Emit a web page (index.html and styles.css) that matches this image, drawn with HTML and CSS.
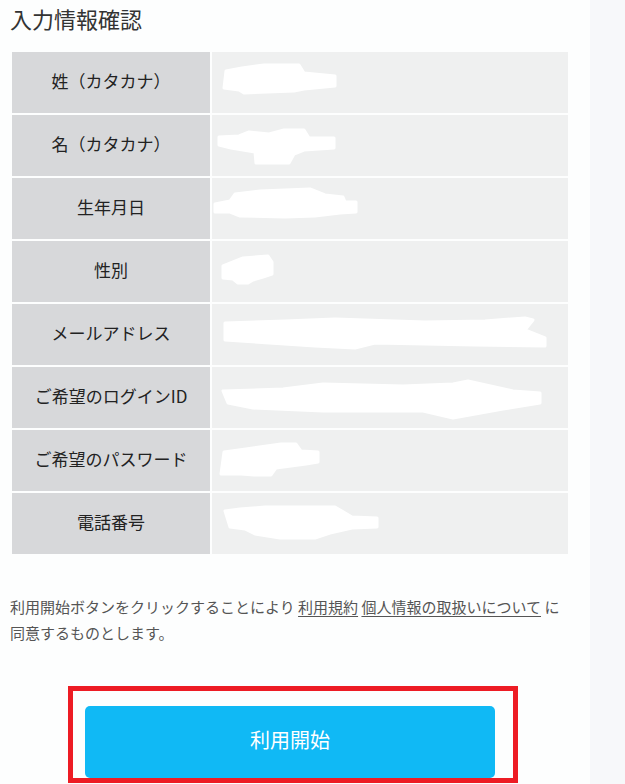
FILE: index.html
```html
<!DOCTYPE html>
<html lang="ja">
<head>
<meta charset="UTF-8">
<meta name="viewport" content="width=device-width, initial-scale=1.0">
<title>入力情報確認</title>
<link rel="stylesheet" href="styles.css">
</head>
<body>
<div class="page">
	<div class="main">
		<h2 class="title">入力情報確認</h2>

		<table class="confirm">
			<tr>
				<th>姓（カタカナ）</th>
				<td><svg viewBox="0 0 356 61"><g transform="translate(12,13)"><path d="M2 6 L18 3 L40 0 L75 0 L80 8 L111 11 L111 21 L80 24 L70 26 L20 28 L15 25 L0 23 Z"/></g></svg></td>
			</tr>
			<tr>
				<th>名（カタカナ）</th>
				<td><svg viewBox="0 0 356 61"><g transform="translate(7,15)"><path d="M0 7 L20 6 L30 2 L50 4 L65 0 L85 0 L90 8 L115 8 L115 18 L85 20 L75 24 L70 33 L37 33 L36 22 L12 18 L0 15 Z"/></g></svg></td>
			</tr>
			<tr>
				<th>生年月日</th>
				<td><svg viewBox="0 0 356 61"><g transform="translate(3,11)"><path d="M0 15 L15 12 L20 5 L45 2 L95 0 L110 6 L128 8 L130 13 L141 13 L141 23 L125 24 L100 27 L70 28 L25 27 L15 23 L0 23 Z"/></g></svg></td>
			</tr>
			<tr>
				<th>性別</th>
				<td><svg viewBox="0 0 356 61"><g transform="translate(11,15)"><path d="M0 10 L10 6 L20 2 L45 0 L49 6 L49 18 L40 21 L30 24 L25 27 L15 27 L10 23 L0 22 Z"/></g></svg></td>
			</tr>
			<tr>
				<th>メールアドレス</th>
				<td><svg viewBox="0 0 356 61"><g transform="translate(13,14)"><path d="M0 5 L60 3 L110 1 L200 4 L260 3 L300 0 L308 2 L300 12 L320 20 L320 28 L250 27 L150 25 L130 30 L90 28 L0 22 Z"/></g></svg></td>
			</tr>
			<tr>
				<th>ご希望のログインID</th>
				<td><svg viewBox="0 0 356 61"><g transform="translate(11,14)"><path d="M0 10 L60 8 L100 3 L180 5 L230 3 L245 0 L290 10 L317 12 L317 22 L280 28 L230 37 L200 30 L150 30 L100 30 L30 27 L5 22 Z"/></g></svg></td>
			</tr>
			<tr>
				<th>ご希望のパスワード</th>
				<td><svg viewBox="0 0 356 61"><g transform="translate(9,14)"><path d="M3 8 L25 5 L60 0 L75 0 L80 7 L97 8 L97 18 L85 20 L55 24 L50 31 L33 31 L20 30 L0 30 Z"/></g></svg></td>
			</tr>
			<tr>
				<th>電話番号</th>
				<td><svg viewBox="0 0 356 61"><g transform="translate(13,14)"><path d="M0 4 L15 2 L40 0 L110 0 L127 10 L152 11 L152 20 L127 21 L105 26 L90 31 L55 31 L30 27 L20 22 L5 20 Z"/></g></svg></td>
			</tr>
		</table>

		<p class="agree">利用開始ボタンをクリックすることにより <a href="#">利用規約</a> <a href="#">個人情報の取扱いについて</a> に同意するものとします。</p>

		<div class="submit-box">
			<button class="submit" type="button">利用開始</button>
		</div>
	</div>
	<div class="side"></div>
</div>
</body>
</html>
```

FILE: styles.css
```css
body {
	margin: 0;
	background: #f7f8fa;
	font-family: "Noto Sans CJK JP", "Noto Sans", sans-serif;
	color: #333;
}

.page {
	display: flex;
	min-height: 784px;
}

.main {
	width: 590px;
	box-sizing: border-box;
	padding: 0 10px;
	background: #fdfefe;
}

.side {
	flex: 1;
}

.title {
	margin: 0;
	padding: 2px 0 2px;
	font-size: 22px;
	line-height: 33px;
	font-weight: normal;
	color: #333;
}

/* 入力内容の表 */
.confirm {
	margin-top: 13px;
	width: 560px;
	border-collapse: separate;
	border-spacing: 2px;
}
.confirm th,
.confirm td {
	height: 61px;
	padding: 0;
}
.confirm th {
	width: 198px;
	box-sizing: border-box;
	padding-bottom: 5px;
	background: #d7d8da;
	font-size: 17px;
	font-weight: normal;
	color: #222;
	text-align: center;
	vertical-align: middle;
}
.confirm td {
	background: #eff0f0;
	vertical-align: top;
}
.confirm td svg {
	display: block;
	width: 356px;
	height: 61px;
	fill: #fff;
	stroke: #fff;
	stroke-width: 3;
	stroke-linejoin: round;
}

.agree {
	margin: 38px 0 0;
	width: 560px;
	font-size: 15px;
	line-height: 26px;
	color: #555;
}
.agree a {
	color: #555;
	text-decoration: underline;
	text-underline-offset: 3px;
}

/* 利用開始ボタン（赤枠） */
.submit-box {
	margin: 40px 0 0 58px;
	width: 450px;
	height: 97px;
	box-sizing: border-box;
	border: 5px solid #ed1c24;
	padding: 15px 0 0 12px;
}
.submit {
	display: block;
	width: 410px;
	height: 72px;
	padding: 0 0 5px;
	border: none;
	border-radius: 5px;
	background: #10b9f5;
	color: #fff;
	font-family: "Noto Sans CJK JP", "Noto Sans", sans-serif;
	font-size: 20px;
	cursor: pointer;
}
```
